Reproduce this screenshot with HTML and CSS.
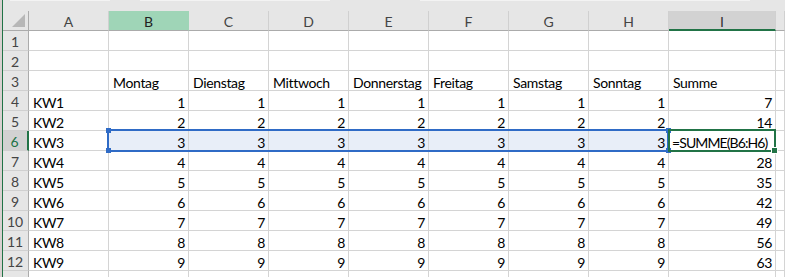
FILE: index.html
```html
<!DOCTYPE html>
<html lang="de">
<head>
    <meta charset="UTF-8">
    <title>Wochentabelle</title>
    <link rel="stylesheet" href="styles.css">
</head>
<body>

<div class="window">
    <div class="topbar">
        <span class="tab t1"></span>
        <span class="tab t2"></span>
        <span class="tab t3"></span>
    </div>

    <div class="sheet-wrap">
        <div class="sheet">
            <!-- Spaltenköpfe -->
            <div class="h corner"></div>
            <div class="h">A</div>
            <div class="h hover">B</div>
            <div class="h">C</div>
            <div class="h">D</div>
            <div class="h">E</div>
            <div class="h">F</div>
            <div class="h">G</div>
            <div class="h">H</div>
            <div class="h active">I</div>
            <div class="h"></div>

            <div class="r">1</div><div class="c"></div><div class="c"></div><div class="c"></div><div class="c"></div><div class="c"></div><div class="c"></div><div class="c"></div><div class="c"></div><div class="c"></div><div class="c"></div>
            <div class="r">2</div><div class="c"></div><div class="c"></div><div class="c"></div><div class="c"></div><div class="c"></div><div class="c"></div><div class="c"></div><div class="c"></div><div class="c"></div><div class="c"></div>
            <div class="r">3</div><div class="c"></div><div class="c">Montag</div><div class="c">Dienstag</div><div class="c">Mittwoch</div><div class="c">Donnerstag</div><div class="c">Freitag</div><div class="c">Samstag</div><div class="c">Sonntag</div><div class="c">Summe</div><div class="c"></div>
            <div class="r">4</div><div class="c">KW1</div><div class="c n">1</div><div class="c n">1</div><div class="c n">1</div><div class="c n">1</div><div class="c n">1</div><div class="c n">1</div><div class="c n">1</div><div class="c n">7</div><div class="c"></div>
            <div class="r">5</div><div class="c">KW2</div><div class="c n">2</div><div class="c n">2</div><div class="c n">2</div><div class="c n">2</div><div class="c n">2</div><div class="c n">2</div><div class="c n">2</div><div class="c n">14</div><div class="c"></div>
            <div class="r active">6</div><div class="c">KW3</div><div class="c n sel">3</div><div class="c n sel">3</div><div class="c n sel">3</div><div class="c n sel">3</div><div class="c n sel">3</div><div class="c n sel">3</div><div class="c n sel">3</div><div class="c formula">=SUMME(B6:H6)</div><div class="c"></div>
            <div class="r">7</div><div class="c">KW4</div><div class="c n">4</div><div class="c n">4</div><div class="c n">4</div><div class="c n">4</div><div class="c n">4</div><div class="c n">4</div><div class="c n">4</div><div class="c n">28</div><div class="c"></div>
            <div class="r">8</div><div class="c">KW5</div><div class="c n">5</div><div class="c n">5</div><div class="c n">5</div><div class="c n">5</div><div class="c n">5</div><div class="c n">5</div><div class="c n">5</div><div class="c n">35</div><div class="c"></div>
            <div class="r">9</div><div class="c">KW6</div><div class="c n">6</div><div class="c n">6</div><div class="c n">6</div><div class="c n">6</div><div class="c n">6</div><div class="c n">6</div><div class="c n">6</div><div class="c n">42</div><div class="c"></div>
            <div class="r">10</div><div class="c">KW7</div><div class="c n">7</div><div class="c n">7</div><div class="c n">7</div><div class="c n">7</div><div class="c n">7</div><div class="c n">7</div><div class="c n">7</div><div class="c n">49</div><div class="c"></div>
            <div class="r">11</div><div class="c">KW8</div><div class="c n">8</div><div class="c n">8</div><div class="c n">8</div><div class="c n">8</div><div class="c n">8</div><div class="c n">8</div><div class="c n">8</div><div class="c n">56</div><div class="c"></div>
            <div class="r">12</div><div class="c">KW9</div><div class="c n">9</div><div class="c n">9</div><div class="c n">9</div><div class="c n">9</div><div class="c n">9</div><div class="c n">9</div><div class="c n">9</div><div class="c n">63</div><div class="c"></div>
            <div class="r"></div><div class="c"></div><div class="c"></div><div class="c"></div><div class="c"></div><div class="c"></div><div class="c"></div><div class="c"></div><div class="c"></div><div class="c"></div><div class="c"></div>
        </div>

        <!-- Bezugsbereich der Formel und aktive Zelle, über dem Blatt -->
        <div class="sheet overlay">
            <div class="range">
                <span class="knob k-tl"></span>
                <span class="knob k-bl"></span>
                <span class="knob k-tr"></span>
                <span class="knob k-br"></span>
            </div>
            <div class="cursor">
                <span class="fill-handle"></span>
            </div>
        </div>
    </div>
</div>

</body>
</html>
```

FILE: styles.css
```css
body {
    margin: 0;
    padding: 0;
    background-color: #ffffff;
    overflow: hidden;
}
.window {
    height: 277px;
    border-left: 2px solid #d9d1d1;
    position: relative;
    overflow: hidden;
}
.window::before {
    content: "";
    position: absolute;
    left: 0;
    top: 0;
    bottom: 0;
    width: 1px;
    background-color: #217346;
    z-index: 3;
}
.topbar {
    height: 11px;
    background-color: #e6e6e6;
    display: flex;
}
.tab {
    height: 1px;
    background-color: #f3f3f3;
}
.t1 { margin-left: 8px; width: 100px; }
.t2 { margin-left: 30px; width: 190px; }
.t3 { margin-left: 90px; width: 330px; }

.sheet-wrap {
    position: relative;
}
.sheet {
    display: grid;
    grid-template-columns: 27px repeat(8, 80px) 107px 1fr;
    grid-auto-rows: 20px;
    font-family: Lato, "Liberation Sans", sans-serif;
    font-size: 14px;
    color: #000;
}
.sheet > div {
    box-sizing: border-box;
    white-space: nowrap;
}
.overlay {
    position: absolute;
    top: 0;
    left: 0;
    right: 0;
    grid-template-rows: repeat(14, 20px);
    pointer-events: none;
}

/* Spaltenköpfe */
.h {
    background-color: #e6e6e6;
    color: #444;
    text-align: center;
    line-height: 21px;
    border-right: 1px solid #d0d0d0;
    border-bottom: 1px solid #ababab;
}
.h.corner {
    position: relative;
    border-right: 1px solid #ababab;
}
.h.corner::after {
    content: "";
    position: absolute;
    right: 3px;
    bottom: 3px;
    border-style: solid;
    border-width: 0 0 13px 13px;
    border-color: transparent transparent #b7b7b7 transparent;
}
.h.hover {
    background-color: #9fd5b7;
    color: #222;
    border-right-color: #9fd5b7;
}
.h.active {
    background-color: #d2d2d2;
    color: #333;
    border-bottom: 2px solid #217346;
}

/* Zeilenköpfe */
.r {
    background-color: #e6e6e6;
    color: #444;
    text-align: center;
    line-height: 22px;
    border-right: 1px solid #ababab;
    border-bottom: 1px solid #d0d0d0;
}
.r.active {
    background-color: #d2d2d2;
    color: #217346;
    border-right: 2px solid #217346;
}

/* Zellen */
.c {
    padding: 0 3px 0 4px;
    line-height: 23px;
    letter-spacing: -0.35px;
    border-right: 1px solid #d4d4d4;
    border-bottom: 1px solid #d4d4d4;
}
.c.n {
    text-align: right;
    padding-right: 3px;
}
.c.sel {
    background-color: #e8eef8;
}
.c.formula {
    padding-left: 3px;
    letter-spacing: -0.9px;
}

.range {
    grid-column: 3 / 10;
    grid-row: 7;
    margin: -2px 0 -1px -2px;
    border: 2px solid #2f6bc6;
    position: relative;
}
.knob {
    position: absolute;
    width: 5px;
    height: 5px;
    background-color: #2f6bc6;
}
.k-tl { left: -3px; top: -3px; }
.k-bl { left: -3px; bottom: -3px; }
.k-tr { right: -4px; top: -3px; }
.k-br { right: -4px; bottom: -3px; }

.cursor {
    grid-column: 10;
    grid-row: 7;
    margin: -2px 0 -1px -1px;
    border: 2px solid #217346;
    position: relative;
}
.fill-handle {
    position: absolute;
    right: -4px;
    bottom: -4px;
    width: 5px;
    height: 5px;
    background-color: #217346;
    border: 1px solid #ffffff;
}
```
